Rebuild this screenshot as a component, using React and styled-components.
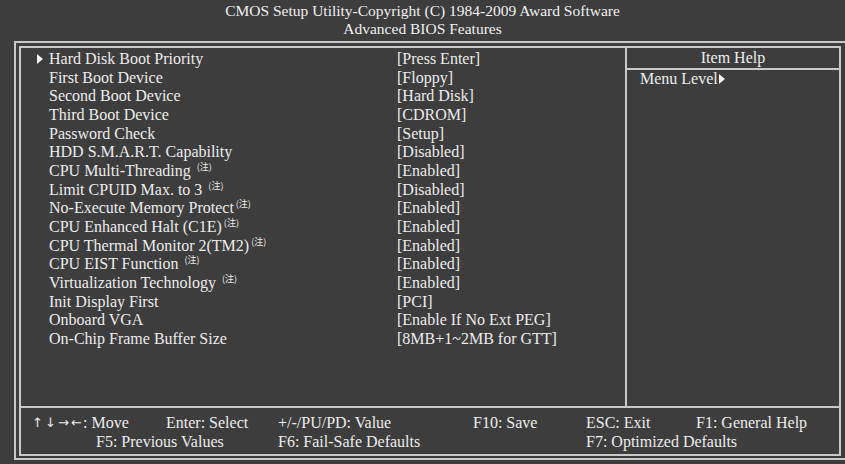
import React from "react";
import styled, { createGlobalStyle } from "styled-components";

const GlobalStyle = createGlobalStyle`
  html, body {
    margin: 0;
    padding: 0;
    background: #3d3d3d;
    overflow: hidden;
  }
  body {
    font-family: "Liberation Serif", "Times New Roman", serif;
    color: #ececec;
  }
`;

const items = [
  { label: "Hard Disk Boot Priority", value: "[Press Enter]", sub: true },
  { label: "First Boot Device", value: "[Floppy]" },
  { label: "Second Boot Device", value: "[Hard Disk]" },
  { label: "Third Boot Device", value: "[CDROM]" },
  { label: "Password Check", value: "[Setup]" },
  { label: "HDD S.M.A.R.T. Capability", value: "[Disabled]" },
  { label: "CPU Multi-Threading ", value: "[Enabled]", note: true },
  { label: "Limit CPUID Max. to 3 ", value: "[Disabled]", note: true },
  { label: "No-Execute Memory Protect", value: "[Enabled]", note: true },
  { label: "CPU Enhanced Halt (C1E)", value: "[Enabled]", note: true },
  { label: "CPU Thermal Monitor 2(TM2)", value: "[Enabled]", note: true },
  { label: "CPU EIST Function ", value: "[Enabled]", note: true },
  { label: "Virtualization Technology ", value: "[Enabled]", note: true },
  { label: "Init Display First", value: "[PCI]" },
  { label: "Onboard VGA", value: "[Enable If No Ext PEG]" },
  { label: "On-Chip Frame Buffer Size", value: "[8MB+1~2MB for GTT]" },
];

export default function App() {
  return (
    <>
      <GlobalStyle />
      <Screen>
        <Header>
          <div>CMOS Setup Utility-Copyright (C) 1984-2009 Award Software</div>
          <div>Advanced BIOS Features</div>
        </Header>
        <OuterFrame>
          <InnerBox>
            <Main>
              <ItemList>
                {items.map((item) => (
                  <Row key={item.label}>
                    <Marker>{item.sub && <Triangle w={6} h={10} />}</Marker>
                    <Label>
                      {item.label}
                      {item.note && <Note>(注)</Note>}
                    </Label>
                    <Value>{item.value}</Value>
                  </Row>
                ))}
              </ItemList>
              <HelpPanel>
                <HelpTitle>Item Help</HelpTitle>
                <HelpText>
                  Menu Level
                  <Triangle w={6} h={10} />
                </HelpText>
              </HelpPanel>
            </Main>
            <Footer>
              <Key col="1">
                <Arrows>
                  {["↑", "↓", "→", "←"].map((a) => (
                    <span key={a}>{a}</span>
                  ))}
                </Arrows>
                : Move
              </Key>
              <Key col="2">Enter: Select</Key>
              <Key col="3">+/-/PU/PD: Value</Key>
              <Key col="4">F10: Save</Key>
              <Key col="5">ESC: Exit</Key>
              <Key col="6">F1: General Help</Key>
              <Key col="1 / span 2" indent={65}>F5: Previous Values</Key>
              <Key col="3 / span 2">F6: Fail-Safe Defaults</Key>
              <Key col="5 / span 2">F7: Optimized Defaults</Key>
            </Footer>
          </InnerBox>
        </OuterFrame>
      </Screen>
    </>
  );
}

function Triangle({ w, h }) {
  return (
    <TriangleSvg width={w} height={h} viewBox={`0 0 ${w} ${h}`}>
      <polygon points={`0,0 ${w},${h / 2} 0,${h}`} fill="#f2f2f2" />
    </TriangleSvg>
  );
}

const Screen = styled.div`
  width: 845px;
  height: 464px;
  display: flex;
  flex-direction: column;
`;

const Header = styled.div`
  height: 41px;
  padding-top: 2px;
  box-sizing: border-box;
  text-align: center;
  font-size: 15.5px;
  line-height: 18px;
  color: #f0f0f0;
`;

const OuterFrame = styled.div`
  margin-left: 14px;
  width: 850px;
  border-top: 2px solid #c9c9c9;
  border-left: 2px solid #c9c9c9;
  border-bottom: 2px solid #c9c9c9;
  padding: 3px 0 2px 3px;
`;

const InnerBox = styled.div`
  width: 818px;
  height: 406px;
  border: 2px solid #c9c9c9;
  display: flex;
  flex-direction: column;
`;

const Main = styled.div`
  height: 358px;
  display: grid;
  grid-template-columns: 604px 1fr;
  border-bottom: 2px solid #c9c9c9;
`;

const ItemList = styled.div`
  padding-top: 2px;
  font-size: 16px;
  line-height: 18.67px;
`;

const Row = styled.div`
  display: grid;
  grid-template-columns: 28px 348px 1fr;
  white-space: nowrap;
`;

const Marker = styled.span`
  display: flex;
  align-items: center;
  padding-left: 15px;
`;

const Label = styled.span``;

const Value = styled.span``;

const Note = styled.sup`
  font-family: "Noto Sans CJK SC", "Liberation Serif", serif;
  font-size: 9px;
  line-height: 0;
  margin-left: 2px;
  vertical-align: 6px;
`;

const HelpPanel = styled.div`
  border-left: 2px solid #c9c9c9;
  display: flex;
  flex-direction: column;
  font-size: 16px;
  line-height: 18.67px;
`;

const HelpTitle = styled.div`
  text-align: center;
  padding-top: 1px;
  height: 19px;
  border-bottom: 2px solid #c9c9c9;
`;

const HelpText = styled.div`
  padding-left: 13px;
  display: flex;
  align-items: center;
`;

const TriangleSvg = styled.svg`
  display: block;
  flex: none;
  margin-left: 1px;
`;

const Footer = styled.div`
  flex: 1;
  display: grid;
  grid-template-columns: 135px 112px 195px 113px 110px 1fr;
  grid-auto-rows: 19px;
  padding: 5px 0 0 10px;
  font-size: 16px;
  line-height: 19px;
  white-space: nowrap;
`;

const Arrows = styled.span`
  display: inline-grid;
  grid-template-columns: repeat(4, 13px);
  font-family: "DejaVu Sans", sans-serif;
  font-size: 13px;
  text-align: center;
  vertical-align: top;
`;

const Key = styled.span`
  grid-column: ${(p) => p.col};
  padding-left: ${(p) => p.indent || 0}px;
`;
